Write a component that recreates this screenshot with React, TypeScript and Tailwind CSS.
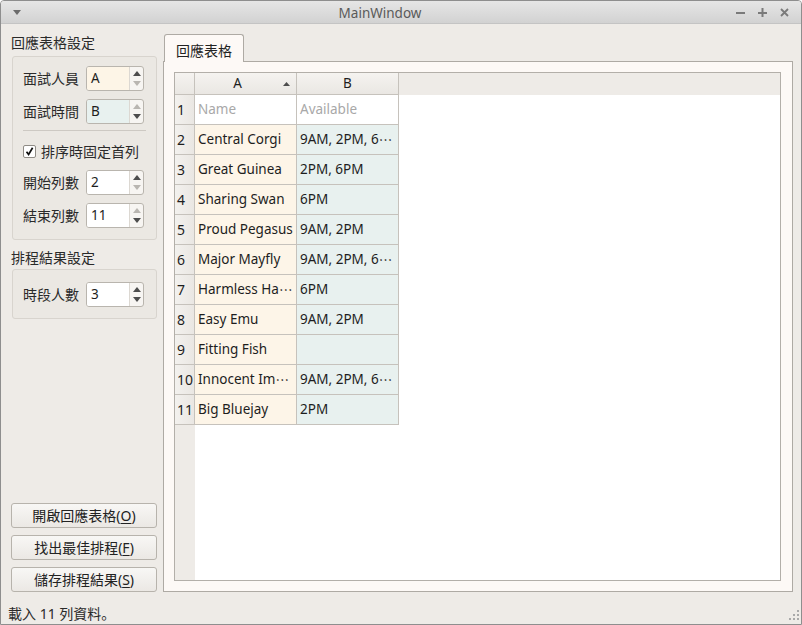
import React from "react";

const FONT = "font-['Noto_Sans','Noto_Sans_CJK_TC',sans-serif]";

function Tri({ dir, active }: { dir: "up" | "down"; active: boolean }) {
  const c = active ? "#4d4d4d" : "#b9b6b1";
  return (
    <svg width="8" height="5" viewBox="0 0 8 5">
      {dir === "up" ? <polygon points="0,5 8,5 4,0" fill={c} /> : <polygon points="0,0 8,0 4,5" fill={c} />}
    </svg>
  );
}

function Spin({ value, bg, up, down }: { value: string; bg: string; up: boolean; down: boolean }) {
  return (
    <div className="flex h-[25px] w-[58px] overflow-hidden rounded-[3px] border border-[#b9b5ae] bg-[#f7f5f2]">
      <div className={`flex flex-1 items-center pl-[4px] text-[13.5px] text-[#1e1e1e] ${bg}`}>{value}</div>
      <div className="flex w-[14px] flex-col items-center justify-center gap-[5px] border-l border-[#dcd8d2]">
        <Tri dir="up" active={up} />
        <Tri dir="down" active={down} />
      </div>
    </div>
  );
}

function SpinRow({ label, value, bg, up, down }: { label: string; value: string; bg: string; up: boolean; down: boolean }) {
  return (
    <div className="flex h-[25px] items-center justify-between pl-[10px] pr-[12px]">
      <span className="text-[14px] text-[#2a2a2a]">{label}</span>
      <Spin value={value} bg={bg} up={up} down={down} />
    </div>
  );
}

function Btn({ text, m }: { text: string; m: string }) {
  return (
    <div className="flex h-[25px] items-center justify-center rounded-[3px] border border-[#b7b3ac] bg-gradient-to-b from-[#f8f7f5] to-[#ebe8e4] text-[14px] text-[#222]">
      <span>
        {text}(<span className="underline underline-offset-2">{m}</span>)
      </span>
    </div>
  );
}

function Cell({ text }: { text: string }) {
  if (text.endsWith("⋯")) {
    return (
      <>
        {text.slice(0, -1)}
        <span className="font-['Noto_Sans_CJK_TC',sans-serif]">⋯</span>
      </>
    );
  }
  return <>{text}</>;
}

const rows: [string, string][] = [
  ["Central Corgi", "9AM, 2PM, 6⋯"],
  ["Great Guinea", "2PM, 6PM"],
  ["Sharing Swan", "6PM"],
  ["Proud Pegasus", "9AM, 2PM"],
  ["Major Mayfly", "9AM, 2PM, 6⋯"],
  ["Harmless Ha⋯", "6PM"],
  ["Easy Emu", "9AM, 2PM"],
  ["Fitting Fish", ""],
  ["Innocent Im⋯", "9AM, 2PM, 6⋯"],
  ["Big Bluejay", "2PM"],
];

export default function App() {
  return (
    <div className={`${FONT} flex h-[625px] w-[802px] flex-col overflow-hidden rounded-t-[4px] border border-[#8e8e8e] bg-[#eeebe7]`}>
      {/* title bar */}
      <div className="flex h-[23px] shrink-0 items-center border-b border-[#c4c4c4] bg-gradient-to-b from-[#e6e6e6] to-[#d2d2d2]">
        <div className="flex w-[30px] justify-center pl-[1px]">
          <svg width="8" height="5" viewBox="0 0 8 5">
            <polygon points="0,0 8,0 4,5" fill="#6b6b6b" />
          </svg>
        </div>
        <div className="flex-1 pt-[2px] text-center text-[13.5px] text-[#5a5a5a]">MainWindow</div>
        <div className="flex w-[72px] items-center gap-[13px] pl-[7px]">
          <svg width="9" height="9" viewBox="0 0 9 9">
            <rect x="0" y="4" width="9" height="2" fill="#7a7a7a" />
          </svg>
          <svg width="9" height="9" viewBox="0 0 9 9">
            <rect x="0" y="4" width="9" height="2" fill="#7a7a7a" />
            <rect x="3.5" y="0" width="2" height="9" fill="#7a7a7a" />
          </svg>
          <svg width="9" height="9" viewBox="0 0 9 9">
            <path d="M1 1 L8 8 M8 1 L1 8" stroke="#7a7a7a" strokeWidth="1.8" />
          </svg>
        </div>
      </div>

      {/* main */}
      <div className="flex h-[568px] shrink-0 pl-[10px] pr-[8px] pt-[10px]">
        {/* left column */}
        <div className="flex w-[146px] flex-col">
          <div className="h-[18px] text-[14px] leading-[18px] text-[#2a2a2a]">回應表格設定</div>
          <div className="ml-px mt-[4px] flex flex-col rounded-[3px] border border-[#d8d4ce] bg-[#ebe8e3] pb-[11px] pt-[9px]">
            <SpinRow label="面試人員" value="A" bg="bg-[#fdf5e7]" up={true} down={false} />
            <div className="mt-[8px]">
              <SpinRow label="面試時間" value="B" bg="bg-[#e8f1ef]" up={false} down={true} />
            </div>
            <div className="mx-[10px] mt-[6px] h-px bg-[#cdc9c3]" />
            <div className="mt-[10px] flex h-[20px] items-center pl-[10px]">
              <div className="flex h-[13px] w-[13px] items-center justify-center rounded-[2px] border border-[#8f8b85] bg-white">
                <svg width="9" height="9" viewBox="0 0 9 9">
                  <path d="M1.5 4.8 L3.6 7.4 L7.6 0.8" stroke="#111" strokeWidth="1.7" fill="none" />
                </svg>
              </div>
              <span className="ml-[5px] text-[14px] text-[#2a2a2a]">排序時固定首列</span>
            </div>
            <div className="mt-[9px]">
              <SpinRow label="開始列數" value="2" bg="bg-white" up={true} down={false} />
            </div>
            <div className="mt-[8px]">
              <SpinRow label="結束列數" value="11" bg="bg-white" up={false} down={true} />
            </div>
          </div>
          <div className="mt-[9px] h-[18px] text-[14px] leading-[18px] text-[#2a2a2a]">排程結果設定</div>
          <div className="ml-px mt-[2px] flex flex-col rounded-[3px] border border-[#d8d4ce] bg-[#ebe8e3] pb-[11px] pt-[12px]">
            <SpinRow label="時段人數" value="3" bg="bg-white" up={true} down={true} />
          </div>
          <div className="mt-auto flex flex-col gap-[7px]">
            <Btn text="開啟回應表格" m="O" />
            <Btn text="找出最佳排程" m="F" />
            <Btn text="儲存排程結果" m="S" />
          </div>
        </div>

        {/* right tab widget */}
        <div className="ml-[6px] flex flex-1 flex-col">
          <div className="flex h-[27px] shrink-0">
            <div className="relative z-10 ml-px flex h-[28px] items-center rounded-t-[3px] border border-b-0 border-[#aeaaa4] bg-[#fdf9f6] pl-[11px] pr-[11px] pt-[3px] text-[14px] text-[#222]">
              回應表格
            </div>
          </div>
          <div className="flex flex-1 flex-col border border-[#aeaaa4] bg-[#fdf9f6] pb-[10px] pl-[10px] pr-[11px] pt-[10px]">
            <div className="flex flex-1 flex-col border border-[#b3afa9] bg-white text-[13.5px]">
              {/* header */}
              <div className="flex h-[22px] shrink-0 bg-[#eeebe7]">
                <div className="w-[20px] border-b border-r border-[#c6c2bc] bg-gradient-to-b from-[#f5f3f0] to-[#eae7e3]" />
                <div className="relative flex w-[102px] items-center border-b border-r border-[#c6c2bc] bg-gradient-to-b from-[#f5f3f0] to-[#eae7e3]">
                  <span className="flex-1 pr-[16px] text-center text-[#1e1e1e]">A</span>
                  <svg className="absolute right-[6px] top-[9px]" width="7" height="4" viewBox="0 0 7 4">
                    <polygon points="0,4 7,4 3.5,0" fill="#4d4d4d" />
                  </svg>
                </div>
                <div className="flex w-[102px] items-center justify-center border-b border-r border-[#c6c2bc] bg-gradient-to-b from-[#f5f3f0] to-[#eae7e3] text-[#1e1e1e]">
                  B
                </div>
                <div className="flex-1" />
              </div>
              {/* body */}
              <div className="flex flex-1">
                <div className="flex w-[20px] flex-col bg-[#eeebe7]">
                  {Array.from({ length: 11 }, (_, i) => (
                    <div
                      key={i}
                      className="flex h-[30px] items-center border-b border-r border-[#c6c2bc] bg-gradient-to-r from-[#f3f1ee] to-[#eae7e3] pl-[2px] text-[14px] text-[#1e1e1e]"
                    >
                      {i + 1}
                    </div>
                  ))}
                </div>
                <div className="flex flex-1 flex-col">
                  <div className="flex h-[30px]">
                    <div className="flex w-[102px] items-center border-b border-r border-[#c6c2bc] bg-white pl-[3px] text-[#a8a8a8]">Name</div>
                    <div className="flex w-[102px] items-center border-b border-r border-[#c6c2bc] bg-white pl-[3px] text-[#a8a8a8]">Available</div>
                  </div>
                  {rows.map(([a, b], i) => (
                    <div key={i} className="flex h-[30px]">
                      <div className="flex w-[102px] items-center overflow-hidden whitespace-nowrap border-b border-r border-[#c6c2bc] bg-[#fdf5e8] pl-[3px] text-[#1e1e1e]">
                        <Cell text={a} />
                      </div>
                      <div className="flex w-[102px] items-center overflow-hidden whitespace-nowrap border-b border-r border-[#c6c2bc] bg-[#e8f1ef] pl-[3px] text-[#1e1e1e]">
                        <Cell text={b} />
                      </div>
                    </div>
                  ))}
                </div>
              </div>
            </div>
          </div>
        </div>
      </div>

      {/* status bar */}
      <div className="flex flex-1 items-start pl-[7px] pr-[1px] pt-[12px]">
        <span className="font-['Noto_Sans','Noto_Sans_CJK_SC',sans-serif] text-[14px] leading-[20px] text-[#2a2a2a]">載入 11 列資料。</span>
        <svg className="ml-auto mt-[6px]" width="11" height="11" viewBox="0 0 11 11">
          <rect x="8" y="0" width="2" height="2" fill="#a9a9a9" />
          <rect x="8" y="4" width="2" height="2" fill="#a9a9a9" />
          <rect x="4" y="4" width="2" height="2" fill="#a9a9a9" />
          <rect x="8" y="8" width="2" height="2" fill="#a9a9a9" />
          <rect x="4" y="8" width="2" height="2" fill="#a9a9a9" />
          <rect x="0" y="8" width="2" height="2" fill="#a9a9a9" />
        </svg>
      </div>
    </div>
  );
}
